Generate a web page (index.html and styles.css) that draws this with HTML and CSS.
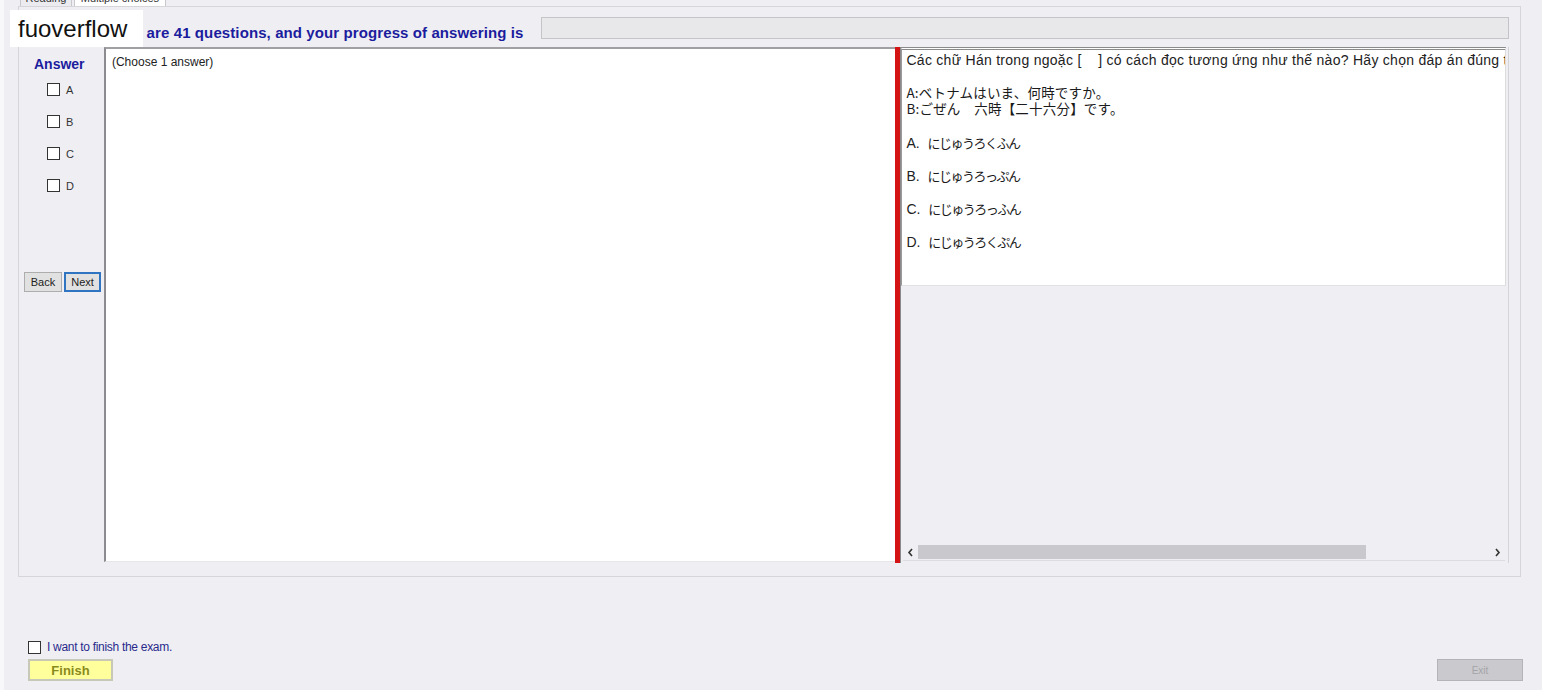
FILE: index.html
```html
<!DOCTYPE html>
<html lang="en">
<head>
    <meta charset="UTF-8">
    <title>Exam</title>
    <link rel="stylesheet" href="styles.css">
</head>
<body>

    <div class="watermark">fuoverflow</div>

    <div class="tabs">
        <div class="tab"><span>Reading</span></div>
        <div class="tab active"><span>Multiple choices</span></div>
    </div>

    <div class="panel">
        <div class="header">
            <span class="header-text">There are 41 questions, and your progress of answering is</span>
            <div class="progress"></div>
        </div>

        <div class="work">
            <div class="sidebar">
                <div class="answer-title">Answer</div>
                <label class="opt"><input type="checkbox"> A</label>
                <label class="opt"><input type="checkbox"> B</label>
                <label class="opt"><input type="checkbox"> C</label>
                <label class="opt"><input type="checkbox"> D</label>
                <div class="nav">
                    <button class="btn">Back</button>
                    <button class="btn next">Next</button>
                </div>
            </div>

            <div class="answer-pane">(Choose 1 answer)</div>

            <div class="splitter"></div>

            <div class="question-pane">
                <div class="question">
                    <p class="q-line">Các chữ Hán trong ngoặc [&nbsp;&nbsp;&nbsp;&nbsp;] có cách đọc tương ứng như thế nào? Hãy chọn đáp án đúng trong các phương án dưới đây</p>
                    <p class="q-dialog"><br><span class="jp">A:ベトナムはいま、何時ですか。</span><br><span class="jp">B:ごぜん　六時【二十六分】です。</span></p>
                    <ul class="choices">
                        <li>A.&nbsp; <span class="jp kana">にじゅうろくふん</span></li>
                        <li>B.&nbsp; <span class="jp kana">にじゅうろっぷん</span></li>
                        <li>C.&nbsp; <span class="jp kana">にじゅうろっふん</span></li>
                        <li>D.&nbsp; <span class="jp kana">にじゅうろくぷん</span></li>
                    </ul>
                </div>
                <div class="hscroll">
                    <svg class="arrow" width="7" height="9" viewBox="0 0 7 9"><path d="M5 1 L2 4.5 L5 8" fill="none" stroke="#333" stroke-width="1.6"/></svg>
                    <div class="track"><div class="thumb"></div></div>
                    <svg class="arrow" width="7" height="9" viewBox="0 0 7 9"><path d="M2 1 L5 4.5 L2 8" fill="none" stroke="#333" stroke-width="1.6"/></svg>
                </div>
            </div>
        </div>
    </div>

    <div class="footer">
        <div class="finish-box">
            <label class="finish-check"><input type="checkbox"> I want to finish the exam.</label>
            <button class="finish">Finish</button>
        </div>
        <button class="exit" disabled>Exit</button>
    </div>

</body>
</html>
```

FILE: styles.css
```css
body {
    margin: 0;
    font-family: "Liberation Sans", Arial, sans-serif;
    background-color: #efeff3;
    border-left: 4px solid #f8f8fa;
    width: 1538px;
    height: 690px;
    overflow: hidden;
    position: relative;
}
.watermark {
    position: absolute;
    left: 6px;
    top: 10px;
    width: 133px;
    height: 37px;
    background-color: white;
    font-size: 24px;
    line-height: 37px;
    padding-left: 8px;
    box-sizing: border-box;
    color: #111;
    z-index: 5;
}
.tabs {
    display: flex;
    height: 6px;
    padding-left: 16px;
}
.tab {
    width: 50px;
    height: 6px;
    overflow: hidden;
    border: 1px solid #c8c8cc;
    border-top: none;
    border-bottom: none;
    background-color: #ececf0;
    font-size: 11px;
    text-align: center;
    margin-right: 2px;
}
.tab span {
    display: block;
    margin-top: -9px;
    line-height: 14px;
    color: #333;
}
.tab.active {
    width: 90px;
    background-color: white;
}
.panel {
    margin-left: 14px;
    width: 1503px;
    height: 571px;
    box-sizing: border-box;
    border: 1px solid #d6d6da;
    padding: 10px 11px 0 5px;
}
.header {
    display: flex;
    height: 22px;
}
.header-text {
    margin-left: 77px;
    padding-top: 8px;
    font-size: 15px;
    font-weight: bold;
    line-height: 16px;
    letter-spacing: 0.1px;
    color: #1c1c9e;
}
.progress {
    margin-left: auto;
    width: 968px;
    height: 22px;
    box-sizing: border-box;
    border: 1px solid #c4c4c8;
    background-color: #e8e8ea;
}
.work {
    display: flex;
    margin-top: 8px;
    height: 516px;
}
.sidebar {
    width: 80px;
    display: flex;
    flex-direction: column;
}
.answer-title {
    margin: 9px 0 0 10px;
    font-size: 14px;
    font-weight: bold;
    line-height: 16px;
    color: #1c1c9e;
}
.opt {
    display: flex;
    align-items: center;
    margin: 7px 0 0 23px;
    height: 21px;
    font-size: 11px;
    color: #333;
}
.opt + .opt {
    margin-top: 11px;
}
input[type=checkbox] {
    appearance: none;
    width: 13px;
    height: 13px;
    margin: 0 6px 0 0;
    border: 1px solid #333;
    background-color: white;
    box-sizing: border-box;
}
.nav {
    display: flex;
    gap: 2px;
    margin-top: 76px;
}
.btn {
    width: 38px;
    height: 20px;
    padding: 0;
    font-family: "Liberation Sans", Arial, sans-serif;
    font-size: 11px;
    color: #222;
    background-color: #e1e1e1;
    border: 1px solid #adadad;
}
.btn.next {
    width: 37px;
    border: 2px solid #2f74c0;
}
.answer-pane {
    width: 792px;
    box-sizing: border-box;
    background-color: white;
    border-top: 2px solid #a0a0a4;
    border-left: 2px solid #8c8c90;
    border-bottom: 1px solid #e6e6e8;
    padding: 5px 0 0 6px;
    font-size: 12px;
    line-height: 16px;
    color: #222;
    height: 515px;
}
.splitter {
    width: 5px;
    height: 516px;
    background-color: #d41414;
    border-right: 1px solid #8a8a8a;
}
.question-pane {
    width: 607px;
    display: flex;
    flex-direction: column;
    border-right: 1px solid #d4d4d8;
}
.question {
    width: 605px;
    height: 239px;
    box-sizing: border-box;
    background-color: white;
    border-top: 3px double #8a8a8a;
    border-left: 1px solid #9a9a9a;
    border-right: 1px solid #dcdcdc;
    border-bottom: 1px solid #e2e2e4;
    padding: 2px 0 0 4px;
    overflow: hidden;
    font-size: 14px;
    line-height: 16px;
    color: #222;
}
.q-line {
    margin: 0;
    white-space: nowrap;
    letter-spacing: 0.28px;
}
.q-dialog {
    margin: 0;
    height: 48px;
}
.jp {
    font-family: "Noto Sans CJK JP", sans-serif;
    font-size: 13.5px;
    line-height: 16px;
    vertical-align: top;
    letter-spacing: 0.2px;
    color: #1a1a1a;
}
.jp.kana {
    font-size: 13px;
    letter-spacing: -1.5px;
}
.choices {
    list-style: none;
    margin: 19px 0 0 0;
    padding: 0;
}
.choices li {
    height: 16px;
    margin-bottom: 17px;
}
.hscroll {
    margin-top: auto;
    margin-bottom: 2px;
    margin-left: 2px;
    width: 602px;
    height: 16px;
    display: flex;
    align-items: center;
    border-bottom: 1px solid #dcdce0;
}
.arrow {
    flex: none;
    margin: 0 4px;
}
.track {
    flex: 1;
    height: 14px;
}
.thumb {
    width: 448px;
    height: 14px;
    background-color: #c9c9cd;
}
.footer {
    display: flex;
    justify-content: space-between;
    align-items: flex-end;
    margin: 63px 19px 0 24px;
}
.finish-check {
    display: flex;
    align-items: center;
    font-size: 12px;
    color: #2a2a8c;
    letter-spacing: -0.3px;
}
.finish {
    margin-top: 5px;
    width: 85px;
    height: 22px;
    padding: 0;
    font-family: "Liberation Sans", Arial, sans-serif;
    font-size: 13px;
    font-weight: bold;
    color: #8a8a1c;
    background-color: #ffff9c;
    border: 2px solid #c8c8b8;
}
.exit {
    width: 86px;
    height: 22px;
    margin-bottom: 0;
    font-family: "Liberation Sans", Arial, sans-serif;
    font-size: 10px;
    color: #a4a4a8;
    background-color: #cacace;
    border: 1px solid #b4b4b8;
}
```
